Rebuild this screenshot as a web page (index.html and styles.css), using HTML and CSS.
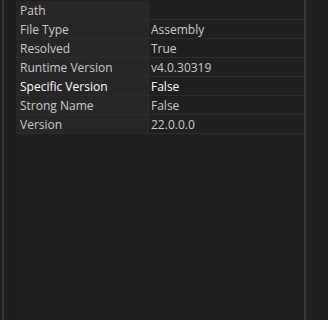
FILE: index.html
```html
<!DOCTYPE html>
<html>
<head>
  <meta charset="utf-8">
  <title>Properties</title>
  <link rel="stylesheet" href="styles.css">
</head>
<body>
  <div class="window">
    <div class="gutter"></div>

    <div class="grid-panel">
      <div class="prop-grid">
        <div class="prop-row">
          <div class="prop-name">Path</div>
          <div class="prop-value"></div>
        </div>
        <div class="prop-row">
          <div class="prop-name">File Type</div>
          <div class="prop-value">Assembly</div>
        </div>
        <div class="prop-row">
          <div class="prop-name">Resolved</div>
          <div class="prop-value">True</div>
        </div>
        <div class="prop-row">
          <div class="prop-name">Runtime Version</div>
          <div class="prop-value">v4.0.30319</div>
        </div>
        <div class="prop-row editable">
          <div class="prop-name">Specific Version</div>
          <div class="prop-value">False</div>
        </div>
        <div class="prop-row">
          <div class="prop-name">Strong Name</div>
          <div class="prop-value">False</div>
        </div>
        <div class="prop-row">
          <div class="prop-name">Version</div>
          <div class="prop-value">22.0.0.0</div>
        </div>
      </div>
    </div>

    <div class="side"></div>
  </div>
</body>
</html>
```

FILE: styles.css
```css
body {
  margin: 0;
  padding: 0;
  width: 328px;
  height: 320px;
  background: #1f1f1f;
  font-family: "Open Sans", "Noto Sans", sans-serif;
  font-size: 12px;
  color: #cccccc;
  overflow: hidden;
}

.window {
  height: 100%;
  display: flex;
}

.gutter {
  width: 14px;
  margin-left: 2px;
  border-left: 2px solid #353535;
  box-sizing: border-box;
  background: #1e1e1e;
}

.grid-panel {
  width: 288px;
  border-right: 1px solid #353535;
  background: #1f1f1f;
}

.prop-grid {
  display: flex;
  flex-direction: column;
  padding-top: 1px;
}

.prop-row {
  display: flex;
  height: 19px;
  border-bottom: 1px solid #2c2c2c;
  box-sizing: border-box;
}

.prop-name {
  width: 128px;
  padding: 2px 0 0 4px;
  background: #262626;
  border-right: 1px solid #2c2c2c;
  line-height: 16px;
  white-space: nowrap;
  overflow: hidden;
}

.prop-value {
  flex: 1;
  padding: 2px 0 0 2px;
  line-height: 16px;
  white-space: nowrap;
}

.prop-row.editable .prop-name,
.prop-row.editable .prop-value {
  color: #ffffff;
}

.side {
  flex: 1;
  border-left: 1px solid #3a3a3a;
  background: #1f1f1f;
}
```
